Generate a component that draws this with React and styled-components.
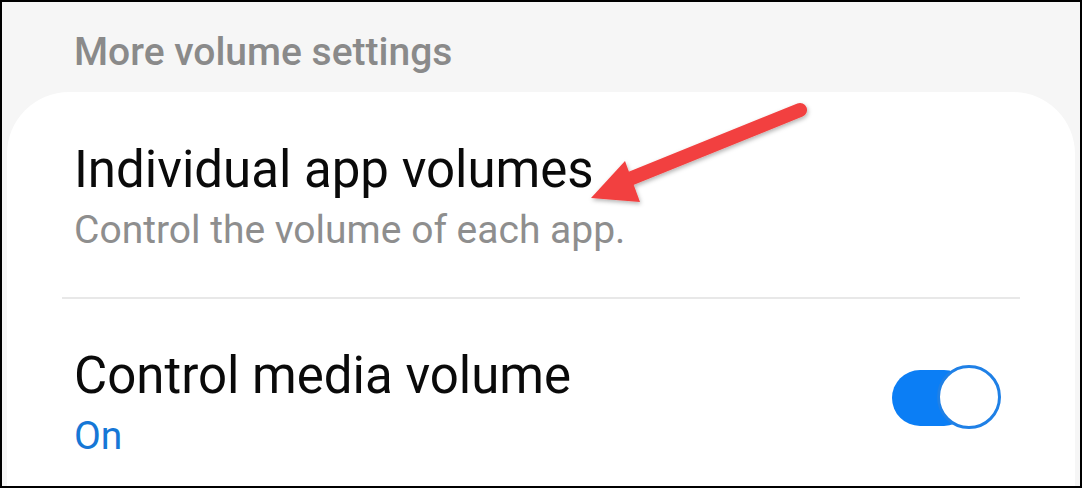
import React from "react";
import styled, { createGlobalStyle } from "styled-components";

const Global = createGlobalStyle`
  html, body { margin: 0; padding: 0; background: #fff; }
  * { box-sizing: border-box; }
`;

const Frame = styled.div`
  position: relative;
  width: 1082px;
  height: 488px;
  border: 2px solid #000;
  background: #f6f6f6;
  font-family: Roboto, "Noto Sans", sans-serif;
  overflow: hidden;
  display: flex;
  flex-direction: column;
`;

const SectionHeader = styled.div`
  padding: 27px 0 0 72px;
  height: 90px;
  flex-shrink: 0;
  font-size: 39px;
  line-height: 46px;
  font-weight: 500;
  color: #8a8a8a;
`;

const Card = styled.div`
  flex: 1;
  margin: 0 5px;
  background: #fff;
  border-radius: 62px 62px 0 0;
  padding-top: 49px;
  display: flex;
  flex-direction: column;
`;

const Row = styled.div`
  display: flex;
  align-items: center;
  padding: 0 74px 0 67px;
`;

const Texts = styled.div`
  flex: 1;
  display: flex;
  flex-direction: column;
  gap: 8px;
`;

const Title = styled.div`
  font-size: 51px;
  line-height: 58px;
  color: #0a0a0a;
`;

const Sub = styled.div`
  font-size: 39px;
  line-height: 46px;
  color: ${(p) => (p.$accent ? "#1677d6" : "#8e8e8e")};
`;

const Divider = styled.div`
  height: 2px;
  background: #e8e8e8;
  margin: 44px 55px 48px 55px;
`;

const Switch = styled.div`
  position: relative;
  width: 109px;
  height: 66px;
  margin-top: -10px;
  flex-shrink: 0;
`;

const Track = styled.div`
  position: absolute;
  left: 0;
  top: 5px;
  width: 80px;
  height: 56px;
  border-radius: 28px;
  background: #0b7ef5;
`;

const Knob = styled.div`
  position: absolute;
  right: 0;
  top: 0;
  width: 64px;
  height: 64px;
  border-radius: 50%;
  background: #fff;
  border: 3px solid #1f80e6;
`;

const ArrowSvg = styled.svg`
  position: absolute;
  left: 0;
  top: 0;
  pointer-events: none;
`;

export default function App() {
  return (
    <>
      <Global />
      <Frame>
        <SectionHeader>More volume settings</SectionHeader>
        <Card>
          <Row>
            <Texts>
              <Title>Individual app volumes</Title>
              <Sub>Control the volume of each app.</Sub>
            </Texts>
          </Row>
          <Divider />
          <Row>
            <Texts>
              <Title>Control media volume</Title>
              <Sub $accent>On</Sub>
            </Texts>
            <Switch>
              <Track />
              <Knob />
            </Switch>
          </Row>
        </Card>
        <ArrowSvg width="1082" height="488" viewBox="0 0 1082 488">
          <defs>
            <filter id="sh" x="-20%" y="-20%" width="140%" height="140%">
              <feDropShadow dx="1" dy="2" stdDeviation="2" floodColor="#000" floodOpacity="0.3" />
            </filter>
          </defs>
          <g filter="url(#sh)" fill="#f2403f" stroke="none">
            <line x1="798" y1="108" x2="625" y2="178" stroke="#f2403f" strokeWidth="14" strokeLinecap="round" />
            <polygon points="589,196 623,159 638,200" strokeLinejoin="round" />
          </g>
        </ArrowSvg>
      </Frame>
    </>
  );
}
